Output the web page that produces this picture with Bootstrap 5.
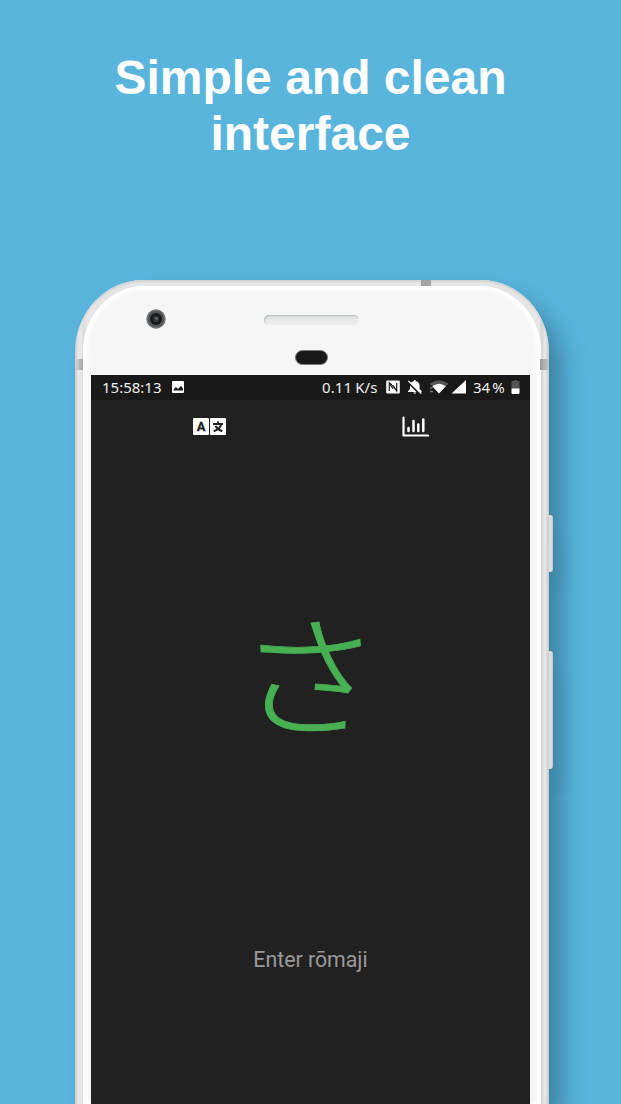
<!DOCTYPE html>
<html lang="en">
<head>
<meta charset="utf-8">
<meta name="viewport" content="width=device-width, initial-scale=1">
<title>Simple and clean interface</title>
<link href="https://cdn.jsdelivr.net/npm/bootstrap@5.3.0/dist/css/bootstrap.min.css" rel="stylesheet">
<style>
body{background:#5ab5dd;font-family:"Liberation Sans",sans-serif}
.promo{height:1104px}
.headline{height:280px;padding-top:50px;font-size:48px;font-weight:700;line-height:56px}
.phone{width:474px;height:824px;margin-left:75px;padding:6px 8px 0;border-radius:68px 68px 0 0/72px 72px 0 0;
 background:linear-gradient(90deg,#c8c8c8 0,#e6e6e6 3px,#e9e9e9 6px,#dcdcdc 8px,#e6e6e6 12px,#e6e6e6 464px,#d5d5d5 467px,#eaeaea 470px,#c9c9c9 474px);
 box-shadow:inset 0 2px 2px #d0d3d5,14px 16px 24px -2px rgba(27,73,94,.5)}
.face{background:#f6f6f6;border-radius:62px 62px 0 0/66px 66px 0 0;padding:0 11px 0 8px;box-shadow:inset 0 3px 5px #fff,inset 4px 0 5px #fff,inset -4px 0 5px #fff}
.forehead{height:89px}
.camera{left:55px;top:23px}
.speaker{left:173px;top:29px;width:95px;height:10px;border-radius:5px;background:linear-gradient(#d2d6d8,#e9e9e9 45%,#eee);box-shadow:inset 1px 1px 1px #bcc1c4}
.sensor{left:204px;top:64px;width:33px;height:15px;border-radius:8px;background:#191919;border:1px solid #77787a}
.screen{background:#212121;width:439px}
.status{height:25px;background:#191919;color:#eee;font:15px/25px "Noto Sans",sans-serif;padding-left:11px}
.status span{white-space:nowrap}
.tools{height:51px}
.kana{height:436px;color:#47b052;font:300 132px/1 "Noto Sans CJK JP",sans-serif}
.kana span{transform:translateX(-2px) scaleX(1.1);-webkit-text-stroke:.7px #47b052}
.entry{height:217px;padding-top:60px;color:#999;font:21.3px/26px Roboto,sans-serif}
.seam{left:1px;top:79px;width:7px;height:11px;background:linear-gradient(90deg,#cfd1d2,#a2a5a7)}
.seam-right{left:465px;width:9px;background:linear-gradient(90deg,#9b9b9b,#c3c8ca)}
.seam-top{left:346px;top:0;width:10px;height:6px;background:#a3a3a3}
.key{left:473px;width:5px;border-radius:0 3px 3px 0;background:linear-gradient(90deg,#c9c9c9,#e4e4e4 40%,#ddd 65%,#c4c4c4);box-shadow:10px 20px 14px rgba(27,73,94,.16)}
.key-power{top:235px;height:57px}
.key-volume{top:371px;height:118px}
</style>
</head>
<body>
<main class="promo overflow-hidden">
 <h1 class="headline text-white text-center mb-0">Simple and clean<br>interface</h1>
 <section class="phone position-relative">
  <i class="seam position-absolute"></i>
  <i class="seam seam-right position-absolute"></i>
  <i class="seam seam-top position-absolute"></i>
  <i class="key key-power position-absolute"></i>
  <i class="key key-volume position-absolute"></i>
  <div class="face h-100">
   <div class="forehead position-relative">
    <svg class="camera position-absolute" width="20" height="20"><circle cx="10" cy="10" r="9.7" fill="#707173"/><circle cx="10" cy="10" r="8" fill="#555"/><circle cx="10" cy="10" r="6" fill="#191a1c"/><circle cx="10" cy="10" r="3" fill="#34373a"/><circle cx="10.5" cy="9.5" r="1.3" fill="#6b7074"/></svg>
    <div class="speaker position-absolute"></div>
    <div class="sensor position-absolute"></div>
   </div>
   <div class="screen h-100">
    <div class="status d-flex">
     <span style="width:70px">15:58:13</span>
     <svg width="12" height="25"><path d="M1 6h10q1 0 1 1v10q0 1-1 1H1q-1 0-1-1V7q0-1 1-1z" fill="#fff"/><path d="M1.7 15.5v-1.3L4 12l2 2 3-3.3 2 3v1.8z" fill="#191919"/></svg>
     <span style="width:62px;margin-left:138px;letter-spacing:.1px;word-spacing:-1px">0.11 K/s</span>
     <svg width="84" height="25" viewBox="0 0 84 25">
      <path d="M3.500 5.500h11q1.300 0 1.300 1.300v10.400q0 1.300-1.300 1.300h-11q-1.300 0-1.300-1.300V6.800q0-1.300 1.300-1.300z" fill="#fff"/><path d="M5.300 16V8L9 13.800M12.700 8v8L9 10.200" fill="none" stroke="#191919" stroke-width="1.200"/><path d="M6.300 8l6.400 8" stroke="#191919" stroke-width="1"/>
      <path d="M24 17v-1l2-2v-3.200q0-3.900 3.700-4.500 0-1.300 1.100-1.300t1.100 1.300q3.700.6 3.700 4.500V14l2 2v1z" fill="#fff"/><path d="M29.200 17.600h3.200q-1.600 2.400-3.200 0z" fill="#fff"/><path d="M23.800 7l12.200 12" stroke="#191919" stroke-width="2"/><path d="M24.300 5.900l13 12.600" stroke="#fff" stroke-width="1.300"/>
      <path d="M45.600 8.800q9.400-7 18.800 0L55 18.500z" fill="#575757"/><path d="M48.300 11.300q6.700-5 13.400 0L55 18.500z" fill="#fff"/><path d="M46 13h2.500M46 16.500h3" stroke="#777" stroke-width="1.300"/>
      <path d="M67.500 18.500 82 5v13.500z" fill="#fff"/>
     </svg>
     <span style="width:38px;margin-left:5px">34<span style="margin-left:2px">%</span></span>
     <svg width="9" height="25"><path d="M3 5h3v1h2.500v8H.5V6H3z" fill="#555"/><path d="M.5 13.500h8V18q0 1-1 1h-6q-1 0-1-1z" fill="#fff"/></svg>
    </div>
    <nav class="tools position-relative">
     <svg class="position-absolute" style="left:102px;top:18px" width="33" height="17"><rect width="16" height="17" rx="1" fill="#fff"/><rect x="17" width="16" height="17" rx="1" fill="#fff"/><text x="8" y="13" text-anchor="middle" font-family="Roboto,sans-serif" font-weight="700" font-size="13" fill="#212121" stroke="#212121" stroke-width=".3">A</text><g fill="none" stroke="#212121" stroke-width="2"><path d="M20 6h10M25 3.500V6M28.300 6q-1.200 5-7.600 7.300M22.500 8q2 3.600 6.800 5.200"/></g></svg>
     <svg class="position-absolute" style="left:311px;top:16px" width="27" height="21" fill="none" stroke="#fff" stroke-linecap="round"><path d="M1.500 1.500v18H26" stroke-width="2.200" stroke-linejoin="round"/><path d="M6.500 12v3M11.500 5v10M16.300 8.500V15M21.300 3.500V15" stroke-width="2.500"/></svg>
    </nav>
    <div class="kana d-flex justify-content-center align-items-center" lang="ja"><span>さ</span></div>
    <div class="entry text-center">Enter rōmaji</div>
   </div>
  </div>
 </section>
</main>
<script src="https://cdn.jsdelivr.net/npm/bootstrap@5.3.0/dist/js/bootstrap.bundle.min.js"></script>
</body>
</html>
